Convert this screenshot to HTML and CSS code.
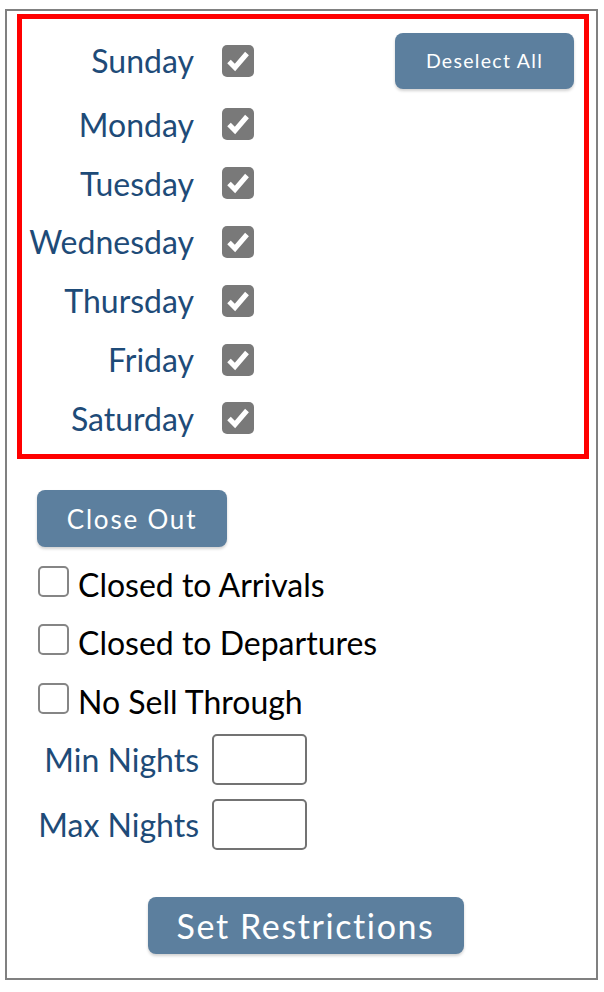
FILE: index.html
```html
<!DOCTYPE html>
<html lang="en">
<head>
<meta charset="utf-8">
<title>Restrictions</title>
<link rel="stylesheet" href="styles.css">
</head>
<body>
<div class="panel">
  <div class="days">
    <div class="day-row first">
      <span class="day-label">Sunday</span>
      <span class="check on"><svg viewBox="0 0 32 32"><path d="M7 16.5 L13 22.5 L25 8.5"/></svg></span>
      <button class="btn btn-small">Deselect All</button>
    </div>
    <div class="day-row">
      <span class="day-label">Monday</span>
      <span class="check on"><svg viewBox="0 0 32 32"><path d="M7 16.5 L13 22.5 L25 8.5"/></svg></span>
    </div>
    <div class="day-row">
      <span class="day-label">Tuesday</span>
      <span class="check on"><svg viewBox="0 0 32 32"><path d="M7 16.5 L13 22.5 L25 8.5"/></svg></span>
    </div>
    <div class="day-row">
      <span class="day-label">Wednesday</span>
      <span class="check on"><svg viewBox="0 0 32 32"><path d="M7 16.5 L13 22.5 L25 8.5"/></svg></span>
    </div>
    <div class="day-row">
      <span class="day-label">Thursday</span>
      <span class="check on"><svg viewBox="0 0 32 32"><path d="M7 16.5 L13 22.5 L25 8.5"/></svg></span>
    </div>
    <div class="day-row">
      <span class="day-label">Friday</span>
      <span class="check on"><svg viewBox="0 0 32 32"><path d="M7 16.5 L13 22.5 L25 8.5"/></svg></span>
    </div>
    <div class="day-row">
      <span class="day-label">Saturday</span>
      <span class="check on"><svg viewBox="0 0 32 32"><path d="M7 16.5 L13 22.5 L25 8.5"/></svg></span>
    </div>
  </div>

  <div class="options">
    <button class="btn btn-close">Close Out</button>
    <div class="opt-row"><span class="check off"></span><span class="opt-label">Closed to Arrivals</span></div>
    <div class="opt-row"><span class="check off"></span><span class="opt-label">Closed to Departures</span></div>
    <div class="opt-row"><span class="check off"></span><span class="opt-label">No Sell Through</span></div>
  </div>

  <div class="nights">
    <span class="n-label">Min Nights</span>
    <span class="n-input"></span>
    <span class="n-label">Max Nights</span>
    <span class="n-input"></span>
  </div>

  <div class="submit">
    <button class="btn btn-set">Set Restrictions</button>
  </div>
</div>
</body>
</html>
```

FILE: styles.css
```css
* { box-sizing: border-box; }

html, body {
  margin: 0;
  padding: 0;
  background: #ffffff;
}

body {
  font-family: Lato, "Liberation Sans", sans-serif;
}

.panel {
  margin: 9px 6px 0 5px;
  height: 971px;
  border: 2px solid #808080;
  display: flex;
  flex-direction: column;
}

.days {
  margin: 3px 7px 0 10px;
  border: 5px solid #ff0000;
  padding: 7px 0 5px 0;
  height: 445px;
}

.day-row {
  display: grid;
  grid-template-columns: 172px 32px 1fr;
  column-gap: 28px;
  align-items: center;
  height: 58.8px;
}

.day-row.first {
  height: 69px;
}

.day-label {
  text-align: right;
  font-size: 32px;
  color: #1e4b78;
  white-space: nowrap;
}

.check {
  display: block;
  width: 32px;
  height: 32px;
  border-radius: 5px;
}

.check.on {
  background: #797979;
}

.check.on svg {
  display: block;
  width: 32px;
  height: 32px;
}

.check.on path {
  fill: none;
  stroke: #ffffff;
  stroke-width: 5;
  stroke-linejoin: miter;
}

.check.off {
  width: 31px;
  height: 31px;
  border: 2px solid #858585;
  border-radius: 5px;
  background: #ffffff;
}

.btn {
  font-family: Lato, "Liberation Sans", sans-serif;
  background: #5c7f9e;
  color: #ffffff;
  border: none;
  border-radius: 8px;
  box-shadow: 0 2px 3px rgba(0, 0, 0, 0.18);
  padding: 0;
  text-align: center;
  cursor: pointer;
}

.btn-small {
  justify-self: end;
  margin-right: 10px;
  width: 179px;
  height: 56px;
  font-size: 19.5px;
  letter-spacing: 1.3px;
}

.options {
  margin: 31px 0 0 30px;
  display: flex;
  flex-direction: column;
  align-items: flex-start;
}

.btn-close {
  width: 190px;
  height: 57px;
  font-size: 26px;
  letter-spacing: 1.8px;
  margin-bottom: 5px;
}

.opt-row {
  display: flex;
  align-items: center;
  gap: 9px;
  height: 58.5px;
  padding-left: 1px;
}

.opt-label {
  font-size: 32px;
  color: #000000;
  white-space: nowrap;
  margin-top: 6px;
}

.nights {
  display: grid;
  grid-template-columns: 192px 95px;
  grid-auto-rows: 65px;
  column-gap: 13px;
  align-items: center;
  margin-top: -1px;
}

.n-label {
  text-align: right;
  font-size: 32px;
  color: #1e4b78;
  white-space: nowrap;
}

.n-input {
  display: block;
  height: 51px;
  border: 2px solid #737373;
  border-radius: 5px;
}

.submit {
  display: flex;
  justify-content: center;
  padding-left: 8px;
  margin-top: 40px;
}

.btn-set {
  width: 316px;
  height: 57px;
  font-size: 34px;
  letter-spacing: 1.6px;
}
```
